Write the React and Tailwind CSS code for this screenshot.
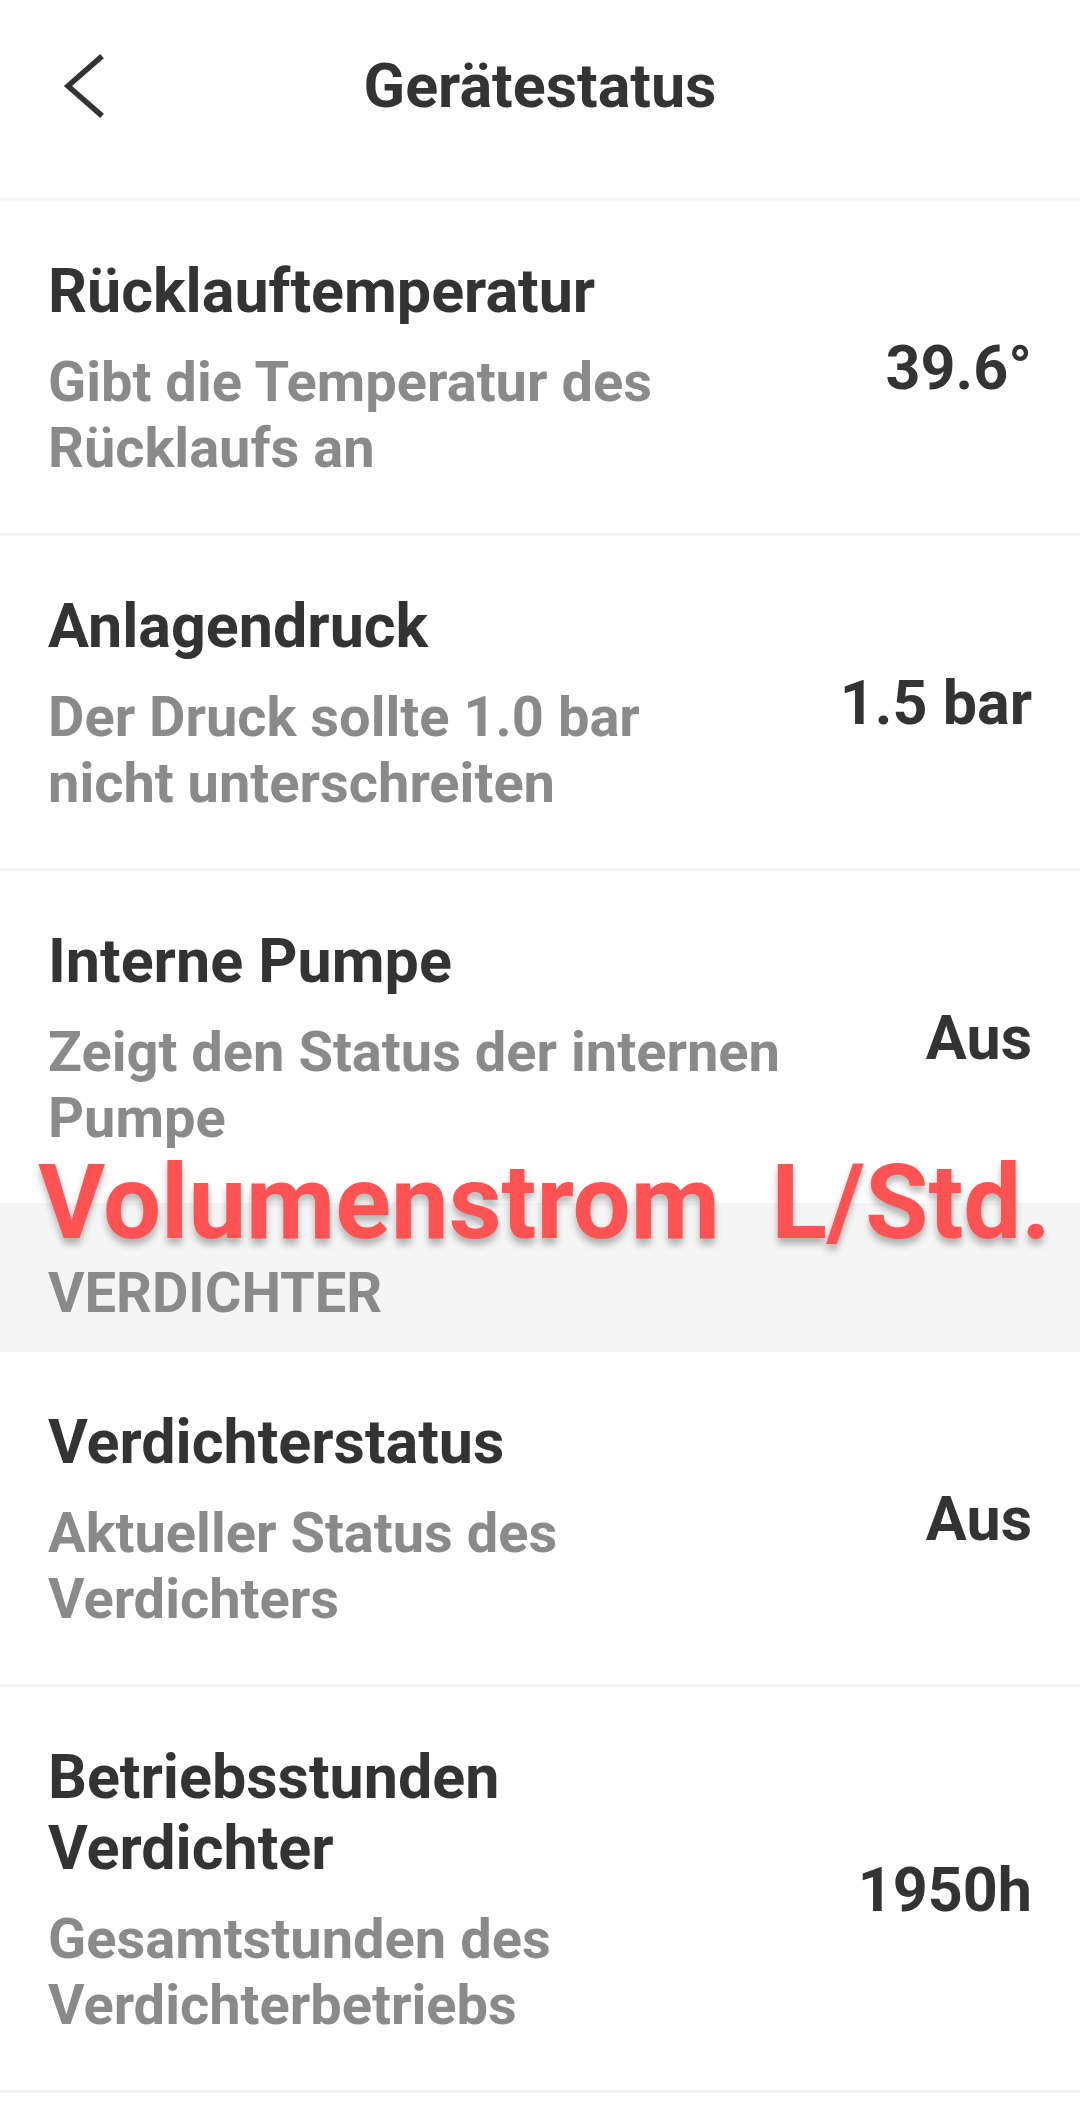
const ROWS_TOP = [
  {
    title: ["Rücklauftemperatur"],
    sub: ["Gibt die Temperatur des", "Rücklaufs an"],
    value: "39.6°",
  },
  {
    title: ["Anlagendruck"],
    sub: ["Der Druck sollte 1.0 bar", "nicht unterschreiten"],
    value: "1.5 bar",
  },
  {
    title: ["Interne Pumpe"],
    sub: ["Zeigt den Status der internen", "Pumpe"],
    value: "Aus",
    noBorder: true,
  },
];

const ROWS_VERDICHTER = [
  {
    title: ["Verdichterstatus"],
    sub: ["Aktueller Status des", "Verdichters"],
    value: "Aus",
  },
  {
    title: ["Betriebsstunden", "Verdichter"],
    sub: ["Gesamtstunden des", "Verdichterbetriebs"],
    value: "1950h",
  },
];

const StatusRow = ({ title, sub, value, noBorder }) => (
  <div
    className={
      "flex items-center justify-between px-[48px] pt-[55px] pb-[52px] " +
      (noBorder ? "" : "border-b-[3px] border-[#f3f3f3]")
    }
  >
    <div className="flex flex-col">
      <div className="text-[61px] leading-[71px] font-bold text-[#333333]">
        {title.map((t, i) => (
          <div key={i}>{t}</div>
        ))}
      </div>
      <div className="mt-[22px] text-[56px] leading-[66px] font-bold text-[#8a8a8a]">
        {sub.map((t, i) => (
          <div key={i}>{t}</div>
        ))}
      </div>
    </div>
    <div className="text-[61px] leading-[71px] font-bold text-[#333333] whitespace-nowrap">{value}</div>
  </div>
);

export default function App() {
  return (
    <div
      className="relative w-[1080px] h-[2121px] overflow-hidden bg-white"
      style={{ fontFamily: "Roboto, 'Noto Sans', 'Liberation Sans', sans-serif" }}
    >
      {/* Header */}
      <div className="h-[201px] border-b-[3px] border-[#f3f3f3]">
        <div className="relative h-[172px] flex items-center justify-center">
          <svg className="absolute left-[60px] top-[53px]" width="46" height="66" viewBox="0 0 46 66" fill="none">
            <path d="M40 5 L8 33 L40 61" stroke="#333333" strokeWidth="5.5" strokeLinecap="square" strokeLinejoin="miter" />
          </svg>
          <div className="text-[61px] font-bold text-[#333333] leading-none">Gerätestatus</div>
        </div>
      </div>

      {ROWS_TOP.map((r, i) => (
        <StatusRow key={i} {...r} />
      ))}

      <div className="h-[149px] bg-[#f5f5f5] px-[48px] pt-[57px] text-[56px] leading-[66px] font-bold text-[#8a8a8a]">
        VERDICHTER
      </div>

      {ROWS_VERDICHTER.map((r, i) => (
        <StatusRow key={i} {...r} />
      ))}

      {/* red annotation laid over the list */}
      <div className="absolute left-[38px] top-[1151px] text-[103px] leading-[103px] font-bold text-[#ff5252] whitespace-pre [text-shadow:0_6px_7px_rgba(0,0,0,0.28)]">
        Volumenstrom  L/Std.
      </div>
    </div>
  );
}
